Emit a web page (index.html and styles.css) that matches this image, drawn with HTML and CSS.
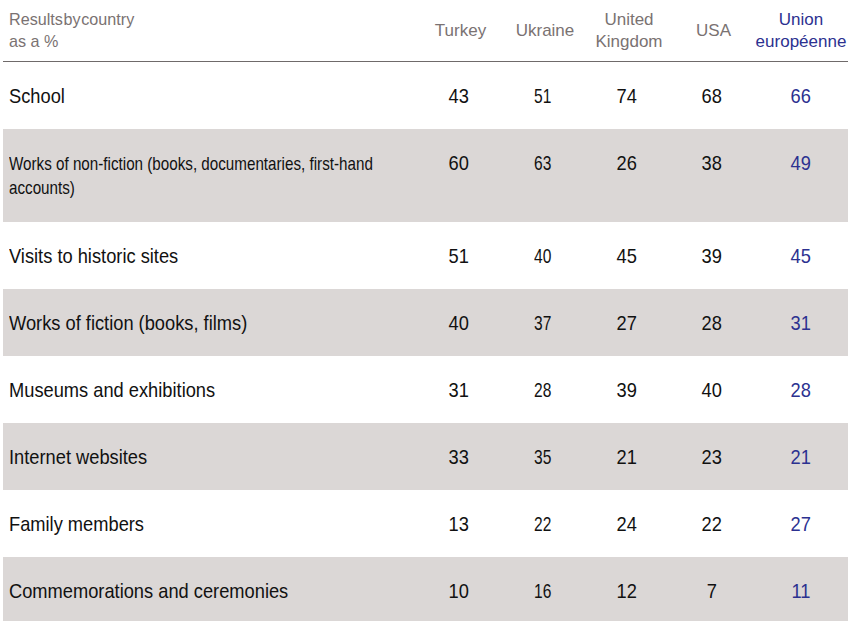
FILE: index.html
```html
<!DOCTYPE html>
<html lang="en">
<head>
<meta charset="utf-8">
<title>Results by country</title>
<link rel="stylesheet" href="styles.css">
</head>
<body>
<div class="table">
  <div class="row head">
    <div class="label caption"><span class="t"><span class="tight">Results by country</span><br>as a %</span></div>
    <div class="cell">Turkey</div>
    <div class="cell">Ukraine</div>
    <div class="cell">United<br>Kingdom</div>
    <div class="cell">USA</div>
    <div class="cell eu">Union<br>européenne</div>
  </div>
  <div class="row">
    <div class="label"><span class="t">School</span></div>
    <div class="cell"><span>43</span></div><div class="cell ua"><span>51</span></div><div class="cell"><span>74</span></div><div class="cell"><span>68</span></div><div class="cell eu"><span>66</span></div>
  </div>
  <div class="row alt tall">
    <div class="label small"><span class="t">Works of non-fiction (books, documentaries, first-hand<br>accounts)</span></div>
    <div class="cell"><span>60</span></div><div class="cell ua"><span>63</span></div><div class="cell"><span>26</span></div><div class="cell"><span>38</span></div><div class="cell eu"><span>49</span></div>
  </div>
  <div class="row">
    <div class="label"><span class="t">Visits to historic sites</span></div>
    <div class="cell"><span>51</span></div><div class="cell ua"><span>40</span></div><div class="cell"><span>45</span></div><div class="cell"><span>39</span></div><div class="cell eu"><span>45</span></div>
  </div>
  <div class="row alt">
    <div class="label"><span class="t">Works of fiction (books, films)</span></div>
    <div class="cell"><span>40</span></div><div class="cell ua"><span>37</span></div><div class="cell"><span>27</span></div><div class="cell"><span>28</span></div><div class="cell eu"><span>31</span></div>
  </div>
  <div class="row">
    <div class="label"><span class="t">Museums and exhibitions</span></div>
    <div class="cell"><span>31</span></div><div class="cell ua"><span>28</span></div><div class="cell"><span>39</span></div><div class="cell"><span>40</span></div><div class="cell eu"><span>28</span></div>
  </div>
  <div class="row alt">
    <div class="label"><span class="t">Internet websites</span></div>
    <div class="cell"><span>33</span></div><div class="cell ua"><span>35</span></div><div class="cell"><span>21</span></div><div class="cell"><span>23</span></div><div class="cell eu"><span>21</span></div>
  </div>
  <div class="row">
    <div class="label"><span class="t">Family members</span></div>
    <div class="cell"><span>13</span></div><div class="cell ua"><span>22</span></div><div class="cell"><span>24</span></div><div class="cell"><span>22</span></div><div class="cell eu"><span>27</span></div>
  </div>
  <div class="row alt">
    <div class="label"><span class="t">Commemorations and ceremonies</span></div>
    <div class="cell"><span>10</span></div><div class="cell ua"><span>16</span></div><div class="cell"><span>12</span></div><div class="cell"><span>7</span></div><div class="cell eu"><span>11</span></div>
  </div>
</div>
</body>
</html>
```
FILE: styles.css
```css
html, body {
  margin: 0;
  padding: 0;
  background: #ffffff;
}
body {
  font-family: "Liberation Sans", Arial, sans-serif;
  color: #111111;
  overflow: hidden;
}
.table {
  padding-left: 3px;
}
.row {
  display: grid;
  grid-template-columns: 413px 85px 84px 84px 85px 94px;
  align-items: center;
  height: 67px;
  font-size: 21px;
  line-height: 24px;
}
.row.tall {
  height: 93px;
}
.row.tall .cell {
  align-self: start;
  padding-top: 22px;
}
.row.alt {
  background: #dbd7d6;
}
.label {
  padding-left: 6px;
  white-space: nowrap;
}
.label .t {
  display: inline-block;
  transform: scaleX(0.87);
  transform-origin: left center;
}
.label.small {
  font-size: 19px;
}
.label.small .t {
  transform: scaleX(0.80);
}
.cell {
  text-align: center;
}
.cell span {
  display: inline-block;
  transform: scaleX(0.87);
}
.cell.ua span {
  transform: scaleX(0.74);
}
.row.head {
  height: 61px;
  border-bottom: 1px solid #6f6a6a;
  font-size: 17px;
  line-height: 22px;
  color: #7a7272;
}
.head .label .t {
  transform: scaleX(0.95);
}
.caption .tight {
  word-spacing: -4px;
}
.head .cell {
  padding-left: 4px;
}
.head .cell.eu {
  padding-left: 0;
}
.eu {
  color: #2c3190;
}
```
